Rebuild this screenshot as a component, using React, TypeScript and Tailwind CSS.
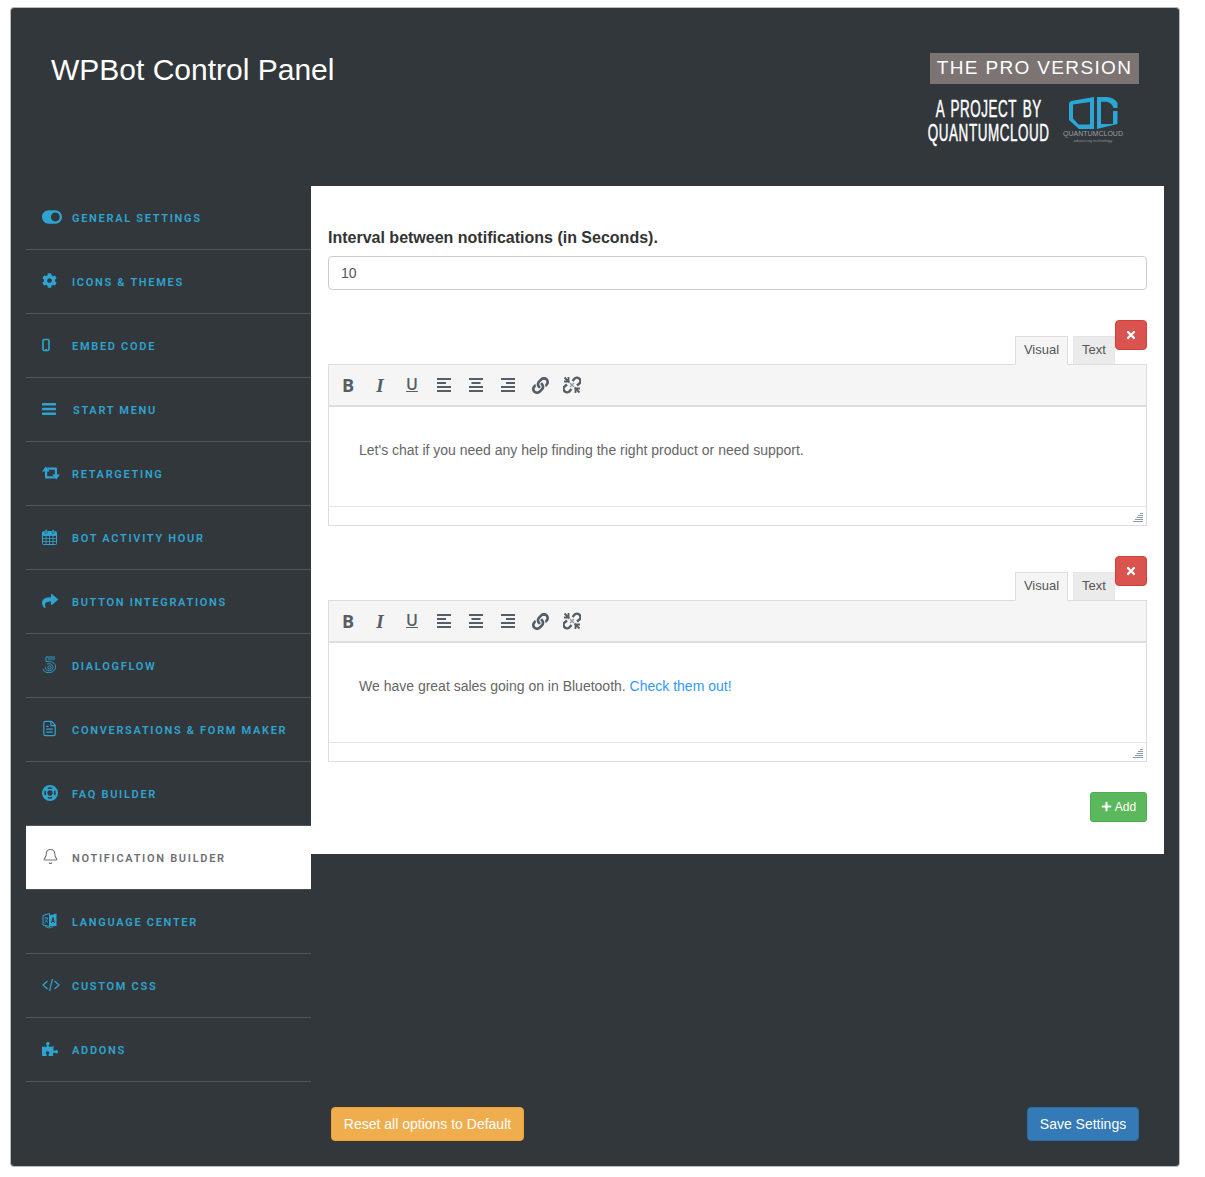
import React from "react";
import { FaToggleOn, FaCog, FaShare, FaPuzzlePiece, FaTimes, FaPlus, FaLink } from "react-icons/fa";
import { Bell, FileText } from "lucide-react";

const Mobile = () => (
  <svg width="16" height="16" viewBox="0 0 16 16" className="shrink-0">
    <rect x="1" y="2.5" width="6" height="11" rx="1" fill="none" stroke="currentColor" strokeWidth="1.6" />
    <rect x="3" y="12" width="2" height="1.2" fill="currentColor" />
  </svg>
);
const Bars = () => (
  <svg width="14" height="12" viewBox="0 0 14 12" fill="currentColor">
    <rect x="0" y="0" width="14" height="2.4" rx="0.5" />
    <rect x="0" y="4.8" width="14" height="2.4" rx="0.5" />
    <rect x="0" y="9.6" width="14" height="2.4" rx="0.5" />
  </svg>
);
const Retweet = () => (
  <svg width="18" height="14" viewBox="0 0 18 14" fill="currentColor">
    <path d="M3.8 0.5L7.8 5.5H5.2V10.2H11.5L13.4 12.5H4Q3 12.5 3 11.5V5.5H0Z" />
    <path d="M14.2 13.5L10.2 8.5H12.8V3.8H6.5L4.6 1.5H14Q15 1.5 15 2.5V8.5H18Z" />
  </svg>
);
const Calendar = () => (
  <svg width="16" height="16" viewBox="0 0 16 16" fill="none" stroke="currentColor" strokeWidth="1">
    <rect x="0.5" y="2.5" width="14" height="13" rx="1" />
    <path d="M0.5 6.5H14.5M0.5 9.5H14.5M0.5 12.5H14.5M4 6.5V15.5M7.5 6.5V15.5M11 6.5V15.5" strokeWidth="0.8" />
    <rect x="0.5" y="3" width="14" height="3.5" fill="currentColor" stroke="none" />
    <rect x="3" y="0.5" width="2.2" height="4" rx="1" fill="currentColor" stroke="#32373c" strokeWidth="0.5" />
    <rect x="10" y="0.5" width="2.2" height="4" rx="1" fill="currentColor" stroke="#32373c" strokeWidth="0.5" />
  </svg>
);
const Dialogflow = () => (
  <svg width="16" height="18" viewBox="0 0 16 18" fill="none" stroke="currentColor" strokeWidth="0.9">
    <path d="M4 1H13M4 1V5.5M6 3H13" />
    <path d="M4 5.5C9 4.5 14 7 13.5 11.5C13 15.5 9 17 5 16.5C3 16 1.5 15 1 13" />
    <path d="M5 8C8 7 11 8.5 11 11.5C11 14 8 15 6 14.5C4 14 3 12.5 3.5 11" />
    <circle cx="7.5" cy="11.5" r="1.6" />
  </svg>
);
const Language = () => (
  <svg width="16" height="17" viewBox="0 0 16 17">
    <path d="M1 3.5L7.5 1.5V14.5L1 13Z" fill="none" stroke="currentColor" strokeWidth="1" />
    <path d="M7.5 3.5L14.5 1.5V14L7.5 14.5Z" fill="currentColor" />
    <path d="M9.5 11L11 5.5L12.5 11M10 9.5H12" fill="none" stroke="#32373c" strokeWidth="1" />
    <path d="M2.5 6H6M4 5V6M5.5 6C5 8.5 4 10 2.5 11M3.5 7.5C4 9 5 10 6 10.5" fill="none" stroke="currentColor" strokeWidth="0.8" />
    <path d="M3 14.5L7 16L11 14.8" fill="none" stroke="currentColor" strokeWidth="0.8" />
  </svg>
);
const Code = () => (
  <svg width="18" height="14" viewBox="0 0 18 14" fill="none" stroke="currentColor" strokeWidth="1.2">
    <path d="M5.5 3L1 7L5.5 11M12.5 3L17 7L12.5 11M10.5 1L7.5 13" />
  </svg>
);
const Ring = () => (
  <svg width="16" height="16" viewBox="0 0 16 16" fill="none" stroke="currentColor">
    <circle cx="8" cy="8" r="6.9" strokeWidth="2.2" />
    <circle cx="8" cy="8" r="3.4" strokeWidth="1.5" />
    <path d="M3.2 3.2L5.6 5.6M12.8 3.2L10.4 5.6M3.2 12.8L5.6 10.4M12.8 12.8L10.4 10.4" strokeWidth="3.4" />
  </svg>
);

const items: [string, React.ReactNode, string?][] = [
  ["GENERAL SETTINGS", <FaToggleOn size={20} />],
  ["ICONS & THEMES", <FaCog size={15} />],
  ["EMBED CODE", <Mobile />],
  ["START MENU", <Bars />, "pl-[1px]"],
  ["RETARGETING", <Retweet />],
  ["BOT ACTIVITY HOUR", <Calendar />],
  ["BUTTON INTEGRATIONS", <FaShare size={16} />],
  ["DIALOGFLOW", <Dialogflow />],
  ["CONVERSATIONS & FORM MAKER", <span className="-ml-[1px]"><FileText size={17} strokeWidth={1.7} /></span>],
  ["FAQ BUILDER", <Ring />],
  ["NOTIFICATION BUILDER", <Bell size={17} strokeWidth={1.5} />],
  ["LANGUAGE CENTER", <Language />],
  ["CUSTOM CSS", <Code />],
  ["ADDONS", <FaPuzzlePiece size={16} />],
];

const NavItem = ({ label, icon, active, extra }: { label: string; icon: React.ReactNode; active?: boolean; extra?: string }) => (
  <li className={`h-[64px] flex items-center pl-4 border-b ${active ? "bg-white text-[#6d7074] border-[#4a4f54]" : "text-[#2fa4d0] border-[#53575b]"}`}>
    <span className="w-[30px] flex items-center shrink-0 mb-[2px]">{icon}</span>
    <span className={`mt-[4px] font-['Roboto',sans-serif] font-semibold text-[11px] tracking-[1.7px] ${extra ?? ""}`}>{label}</span>
  </li>
);

const AlignIcon = ({ kind }: { kind: "left" | "center" | "right" }) => {
  const x = (w: number) => (kind === "left" ? 0 : kind === "center" ? (14 - w) / 2 : 14 - w);
  return (
    <svg width="14" height="14" viewBox="0 0 14 14" fill="#555d66">
      <rect x={x(14)} y="0" width="14" height="2" />
      <rect x={x(9)} y="4" width="9" height="2" />
      <rect x={x(14)} y="8" width="14" height="2" />
      <rect x={x(14)} y="12" width="14" height="2" />
    </svg>
  );
};
const Unlink = () => (
  <svg width="18" height="18" viewBox="0 0 18 18" fill="none" stroke="#555d66">
    <path d="M9.5 5L12 2.2A3.6 3.6 0 0 1 17 7L14 9.5" strokeWidth="2.4" />
    <path d="M8.5 13L6 15.8A3.6 3.6 0 0 1 1 11L4 8.5" strokeWidth="2.4" />
    <path d="M1.5 1.5L6.5 6.5M16.5 16.5L11.5 11.5M1 5.5H5.5M5.5 1V5.5M12.5 17V12.5M17 12.5H12.5" strokeWidth="1.8" />
    <path d="M7 7L11 11M11 7L7 11" stroke="#8f959b" strokeWidth="1.2" />
  </svg>
);

const Tool = ({ children }: { children: React.ReactNode }) => (
  <span className="w-[32px] h-[32px] flex items-center justify-center text-[#555d66]">{children}</span>
);

const Editor = ({ children }: { children: React.ReactNode }) => (
  <div>
    <div className="flex justify-end items-start h-[44px]">
      <div className="flex items-end gap-[5px] mt-4 h-[28px] font-['Liberation_Sans',sans-serif] text-[13px] text-[#555]">
        <span className="w-[53px] h-[29px] pb-[2px] relative top-[1px] bg-[#f5f5f5] border border-[#ddd] border-b-[#f5f5f5] flex items-center justify-center">Visual</span>
        <span className="w-[42px] h-[28px] pb-[2px] bg-[#ebebeb] border border-[#e5e5e5] border-b-0 flex items-center justify-center">Text</span>
      </div>
      <button className="w-[32px] h-[30px] rounded-[4px] bg-[#d9534f] border border-[#d43f3a] text-white flex items-center justify-center">
        <FaTimes size={12} />
      </button>
    </div>
    <div className="border border-[#ddd]">
      <div className="h-[42px] bg-[#f5f5f5] border-b-2 border-[#ddd] flex items-center pl-[3px]">
        <Tool><span className="font-['Open_Sans',sans-serif] font-bold text-[18px] leading-none">B</span></Tool>
        <Tool><span className="font-['Liberation_Serif',serif] font-bold italic text-[19px] leading-none">I</span></Tool>
        <Tool><span className="font-['Open_Sans',sans-serif] text-[16px] font-semibold leading-none underline underline-offset-1 -translate-y-[1px]">U</span></Tool>
        <Tool><AlignIcon kind="left" /></Tool>
        <Tool><AlignIcon kind="center" /></Tool>
        <Tool><AlignIcon kind="right" /></Tool>
        <Tool><FaLink size={17} /></Tool>
        <Tool><Unlink /></Tool>
      </div>
      <div className="h-[99px] px-[30px] pt-[34px] font-['Liberation_Sans',sans-serif] text-[14px] leading-[19px] text-[#666]">{children}</div>
      <div className="h-[19px] border-t border-[#e5e5e5] flex justify-end items-end p-[3px]">
        <svg width="10" height="10" viewBox="0 0 10 10" stroke="#8a98a8" strokeWidth="1">
          <path d="M7 1.5H10M5 3.5H10M3.5 5.5H10M2 7.5H10M0 9.5H10" />
        </svg>
      </div>
    </div>
  </div>
);

const Logo = () => (
  <svg width="50" height="34" viewBox="0 0 50 34" fill="#2ba6d6" fillRule="evenodd">
    <path d="M0 7L2 5L25 1V33H10L0 24ZM4 8.5V22.5L9.5 28.5H21V6Z" />
    <path d="M28 1H38Q46 2 48.5 7V12H44.5Q43 7 38 5.7H32V28H44V15H48.5V28L28 33Z" />
  </svg>
);

export default function App() {
  return (
    <div className="h-[1177px] w-[1205px] pt-[7px] pl-[10px] bg-white">
      <div className="w-[1170px] h-[1160px] rounded-[4px] bg-[#32373c] border border-[#bbb] flex flex-col">
        <header className="h-[178px] shrink-0 flex justify-between pl-[40px] pr-[40px]">
          <h1 className="mt-[44px] font-['Liberation_Sans',sans-serif] text-[30px] leading-[36px] text-white">WPBot Control Panel</h1>
          <div className="mt-[45px] w-[209px] flex flex-col items-stretch">
            <div className="h-[31px] bg-[#7b7473] text-white font-['Liberation_Sans',sans-serif] text-[19px] tracking-[1.35px] flex items-center justify-center whitespace-nowrap">THE PRO VERSION</div>
            <div className="flex mt-[13px] items-start">
              <div className="w-[118px] -mb-[1px] flex flex-col items-center text-white font-['Liberation_Sans',sans-serif] text-[24px] leading-[24px] tracking-[1px] whitespace-nowrap [-webkit-text-stroke:0.5px_white]">
                <div className="scale-x-[0.56] [word-spacing:3px]">A PROJECT BY</div>
                <div className="scale-x-[0.56]">QUANTUMCLOUD</div>
              </div>
              <div className="ml-[10px] -mt-[1px] w-[70px] flex flex-col items-center">
                <div className="pl-[2px]"><Logo /></div>
                <div className="font-['Liberation_Sans',sans-serif] text-[7px] leading-[8px] text-[#9a9da0] whitespace-nowrap">QUANTUMCLOUD</div>
                <div className="font-['Liberation_Sans',sans-serif] text-[4px] leading-[5px] text-[#8a8d90] whitespace-nowrap">advancing technology</div>
              </div>
            </div>
          </div>
        </header>
        <div className="flex flex-1 pl-[15px]">
          <ul className="w-[285px] shrink-0">
            {items.map(([label, icon, extra]) => (
              <NavItem key={label} label={label} icon={icon} extra={extra} active={label === "NOTIFICATION BUILDER"} />
            ))}
          </ul>
          <div className="w-[853px] flex flex-col">
            <main className="h-[668px] bg-white px-[17px] pt-[43px]">
              <label className="block font-['Liberation_Sans',sans-serif] font-bold text-[16px] leading-[18px] text-[#333]">Interval between notifications (in Seconds).</label>
              <input readOnly value="10" className="block mt-[9px] w-full h-[34px] rounded-[4px] border border-[#ccc] px-[12px] font-['Liberation_Sans',sans-serif] text-[14px] text-[#555]" />
              <div className="mt-[30px]">
                <Editor>Let's chat if you need any help finding the right product or need support.</Editor>
              </div>
              <div className="mt-[30px]">
                <Editor>
                  We have great sales going on in Bluetooth. <span className="text-[#3399f3]">Check them out!</span>
                </Editor>
              </div>
              <div className="flex justify-end mt-[30px]">
                <button className="w-[57px] h-[30px] pb-[1px] rounded-[3px] bg-[#5cb85c] border border-[#4cae4c] text-white font-['Liberation_Sans',sans-serif] text-[12px] flex items-center justify-center gap-[3px]">
                  <FaPlus size={11} /> Add
                </button>
              </div>
            </main>
            <div className="mt-auto mb-[25px] pl-[20px] pr-[25px] flex justify-between font-['Liberation_Sans',sans-serif] text-[14px] text-white">
              <button className="h-[34px] w-[193px] rounded-[4px] bg-[#f0ad4e] border border-[#eea236]">Reset all options to Default</button>
              <button className="h-[34px] w-[112px] rounded-[4px] bg-[#337ab7] border border-[#2e6da4]">Save Settings</button>
            </div>
          </div>
        </div>
      </div>
    </div>
  );
}
